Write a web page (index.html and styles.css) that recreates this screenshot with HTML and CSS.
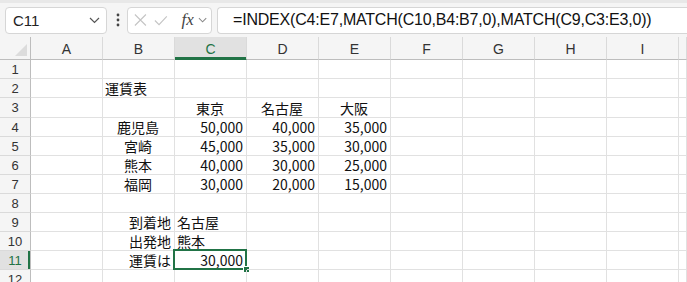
FILE: index.html
```html
<!DOCTYPE html>
<html lang="ja">
<head>
  <meta charset="UTF-8">
  <meta name="viewport" content="width=device-width, initial-scale=1.0">
  <title>運賃表</title>
  <link rel="stylesheet" href="styles.css">
</head>
<body>
  <div class="formula-bar">
    <div class="name-box">
      <span>C11</span>
      <svg width="11" height="7" viewBox="0 0 11 7"><path d="M1 1l4.5 4.5L10 1" fill="none" stroke="#555" stroke-width="1.2"/></svg>
    </div>
    <svg class="grip" width="4" height="14" viewBox="0 0 4 14"><circle cx="2" cy="2" r="1.4"/><circle cx="2" cy="7" r="1.4"/><circle cx="2" cy="12" r="1.4"/></svg>
    <div class="fx-buttons">
      <svg width="14" height="14" viewBox="0 0 14 14"><path d="M1 1l12 12M13 1L1 13" stroke="#c4c4c4" stroke-width="1.2"/></svg>
      <svg width="15" height="11" viewBox="0 0 15 11"><path d="M1 5.5l4.5 4.5L14 1" fill="none" stroke="#c4c4c4" stroke-width="1.2"/></svg>
      <span class="fx">fx</span>
      <svg width="10" height="6" viewBox="0 0 10 6"><path d="M1 1l4 4 4-4" fill="none" stroke="#888" stroke-width="1.1"/></svg>
    </div>
    <div class="formula-input">=INDEX(C4:E7,MATCH(C10,B4:B7,0),MATCH(C9,C3:E3,0))</div>
  </div>

  <div class="sheet" id="sheet">
    <div class="corner">
      <svg width="12" height="12" viewBox="0 0 12 12"><path d="M12 0V12H0z" fill="#dcdcdc"/></svg>
    </div>
    <div class="colhead">A</div>
    <div class="colhead">B</div>
    <div class="colhead selected">C</div>
    <div class="colhead">D</div>
    <div class="colhead">E</div>
    <div class="colhead">F</div>
    <div class="colhead">G</div>
    <div class="colhead">H</div>
    <div class="colhead">I</div>
    <div class="colhead"></div>
  </div>

  <script>
    const cols = ['A', 'B', 'C', 'D', 'E', 'F', 'G', 'H', 'I', 'J'];

    // [text, align] - numbers and labels default to right
    const data = {
      2: { B: ['運賃表', 'left'] },
      3: { C: ['東京', 'center'], D: ['名古屋', 'center'], E: ['大阪', 'center'] },
      4: { B: ['鹿児島', 'center'], C: ['50,000'], D: ['40,000'], E: ['35,000'] },
      5: { B: ['宮崎', 'center'], C: ['45,000'], D: ['35,000'], E: ['30,000'] },
      6: { B: ['熊本', 'center'], C: ['40,000'], D: ['30,000'], E: ['25,000'] },
      7: { B: ['福岡', 'center'], C: ['30,000'], D: ['20,000'], E: ['15,000'] },
      9: { B: ['到着地'], C: ['名古屋', 'left'] },
      10: { B: ['出発地'], C: ['熊本', 'left'] },
      11: { B: ['運賃は'], C: ['30,000'] }
    };

    const active = { row: 11, col: 'C' };
    const sheet = document.getElementById('sheet');

    for (let r = 1; r <= 12; r++) {
      const head = document.createElement('div');
      head.className = 'rowhead';
      if (r === active.row) head.classList.add('selected');
      head.textContent = r;
      sheet.appendChild(head);

      cols.forEach(c => {
        const cell = document.createElement('div');
        cell.className = 'cell';
        const value = data[r] && data[r][c];
        if (value) {
          cell.textContent = value[0];
          cell.classList.add(value[1] || 'right');
        }
        if (r === active.row && c === active.col) cell.classList.add('active');
        sheet.appendChild(cell);
      });
    }
  </script>
</body>
</html>
```

FILE: styles.css
```css
:root {
  --bar-bg: #f5f5f5;
  --grid-line: #e1e1e1;
  --head-line: #bdbdbd;
  --excel-green: #217346;
  --text-color: #222;
}

body {
  margin: 0;
  background-color: #fff;
  color: var(--text-color);
  overflow: hidden;
}

/* formula bar */
.formula-bar {
  display: flex;
  align-items: center;
  height: 34px;
  padding-left: 5px;
  background-color: var(--bar-bg);
  border-top: 3px solid #e8e8e8;
  font-family: "Liberation Sans", Arial, sans-serif;
}

.name-box {
  display: flex;
  align-items: center;
  justify-content: space-between;
  box-sizing: border-box;
  width: 102px;
  height: 27px;
  padding: 0 6px 0 7px;
  background-color: #fff;
  border: 1px solid #d6d6d6;
  border-radius: 4px;
  font-size: 15px;
  color: #222;
}

.grip {
  fill: #444;
  margin: 0 7px 0 9px;
}

.fx-buttons {
  display: flex;
  align-items: center;
  box-sizing: border-box;
  width: 85px;
  height: 27px;
  padding: 0 4px 0 6px;
  gap: 7px;
  background-color: #fff;
  border: 1px solid #d6d6d6;
  border-radius: 4px;
}

.fx {
  font-family: "Liberation Serif", "Times New Roman", serif;
  font-style: italic;
  font-size: 17px;
  color: #444;
  margin-left: 7px;
  margin-right: -3px;
}

.formula-input {
  flex: 1;
  box-sizing: border-box;
  height: 27px;
  margin-left: 5px;
  padding-left: 15px;
  display: flex;
  align-items: center;
  background-color: #fff;
  border: 1px solid #d6d6d6;
  border-right: none;
  border-radius: 4px 0 0 4px;
  font-size: 16px;
  letter-spacing: -0.2px;
  color: #111;
  white-space: nowrap;
}

/* grid */
.sheet {
  display: grid;
  grid-template-columns: 31px repeat(9, 72px) 1fr;
  grid-template-rows: 23px 19px 19px 20px repeat(9, 19px);
}

.corner,
.colhead,
.rowhead {
  box-sizing: border-box;
  background-color: var(--bar-bg);
  font-family: "Liberation Sans", Arial, sans-serif;
  font-size: 14px;
  color: #333;
  display: flex;
  align-items: center;
  justify-content: center;
}

.corner {
  justify-content: flex-end;
  align-items: flex-end;
  padding: 0 3px 3px 0;
  border-right: 1px solid var(--head-line);
  border-bottom: 1px solid var(--head-line);
}

.colhead {
  border-right: 1px solid #dadada;
  border-bottom: 1px solid var(--head-line);
  padding-top: 2px;
}

.colhead.selected {
  background-color: #e1e1e1;
  color: var(--excel-green);
  border-bottom-color: var(--excel-green);
  box-shadow: inset 0 -2px 0 var(--excel-green);
}

.rowhead {
  border-right: 1px solid var(--head-line);
  border-bottom: 1px solid #dadada;
  font-size: 13px;
}

.rowhead.selected {
  background-color: #e1e1e1;
  color: var(--excel-green);
  box-shadow: inset -2px 0 0 var(--excel-green);
}

.cell {
  position: relative;
  box-sizing: border-box;
  display: flex;
  align-items: center;
  padding: 0 3px 0 2px;
  border-right: 1px solid var(--grid-line);
  border-bottom: 1px solid var(--grid-line);
  font-family: "Noto Sans CJK JP", sans-serif;
  font-size: 14px;
  line-height: 1;
  color: #111;
  white-space: nowrap;
}

.cell.left {
  justify-content: flex-start;
}

.cell.center {
  justify-content: center;
}

.cell.right {
  justify-content: flex-end;
}

.cell.active::before {
  content: '';
  position: absolute;
  top: -2px;
  left: -2px;
  right: -1px;
  bottom: -1px;
  border: 2px solid var(--excel-green);
}

.cell.active::after {
  content: '';
  position: absolute;
  right: -4px;
  bottom: -4px;
  width: 5px;
  height: 5px;
  background-color: var(--excel-green);
  border: 1px solid #fff;
}
```
